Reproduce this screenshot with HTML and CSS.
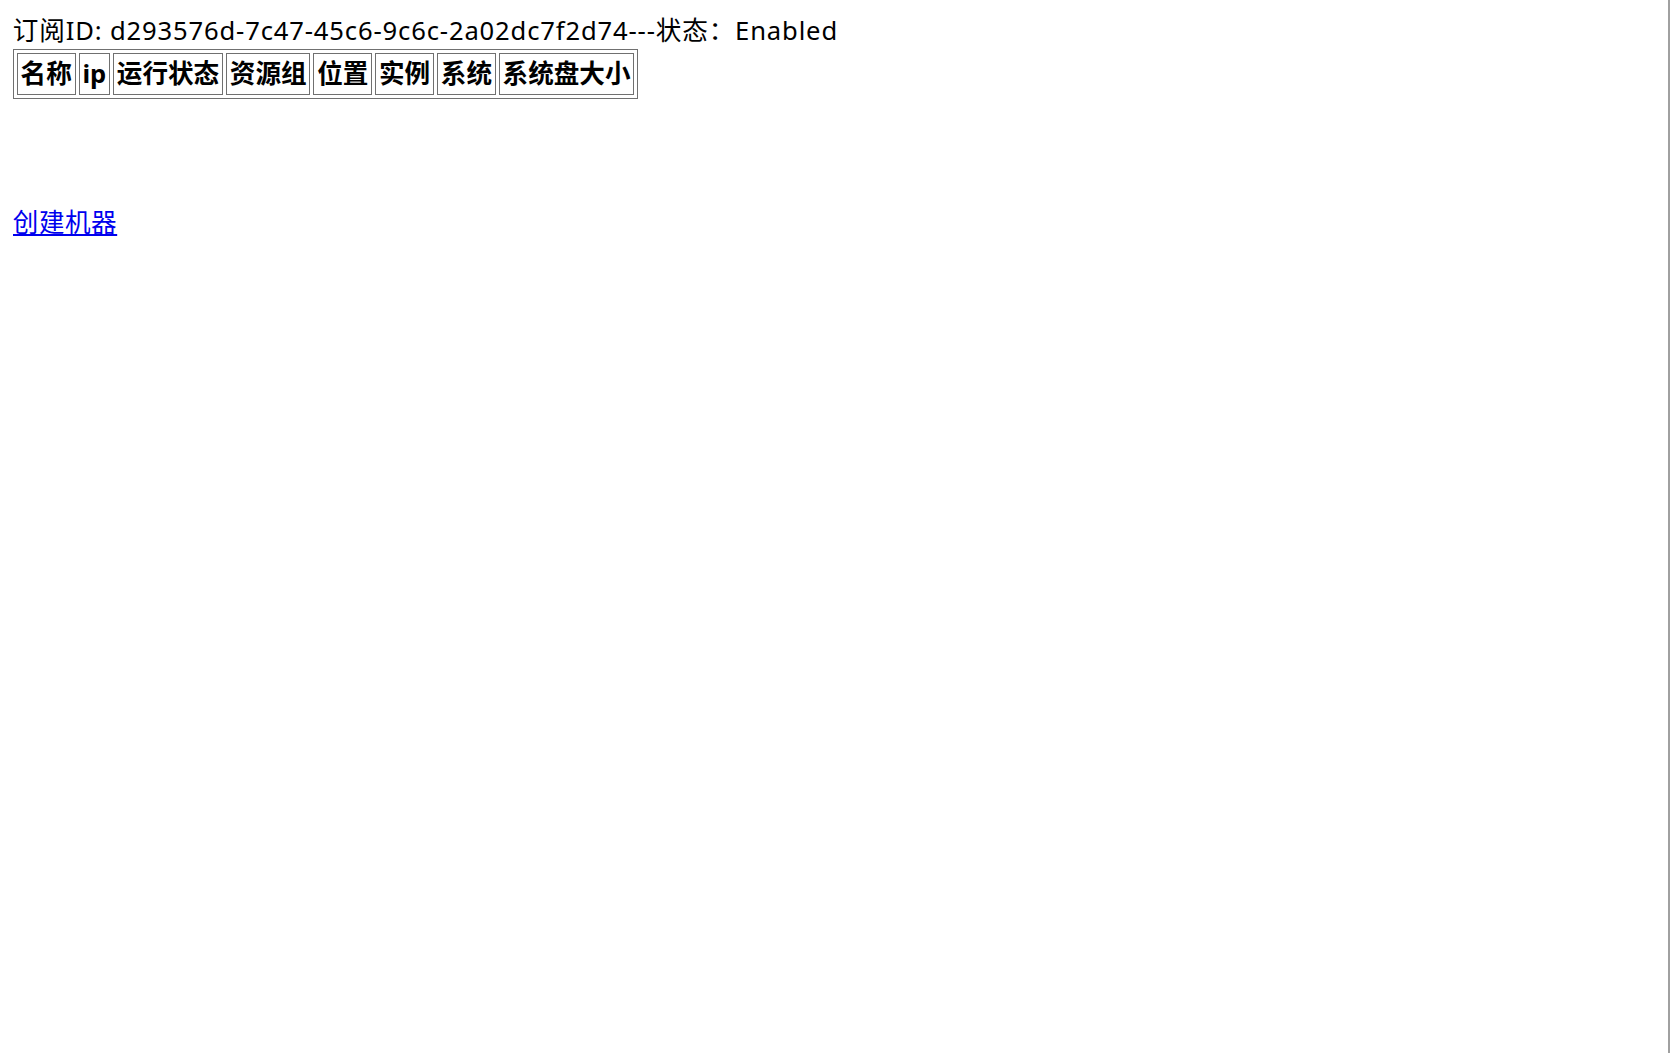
FILE: index.html
```html
<!DOCTYPE html>
<html lang="zh-CN">
<head>
<meta charset="utf-8">
<title>订阅</title>
<link rel="stylesheet" href="styles.css">
</head>
<body>
<div class="sub">订阅ID: d293576d-7c47-45c6-9c6c-2a02dc7f2d74---状态：Enabled</div>
<table class="vm-table">
<thead>
<tr>
<th>名称</th><th>ip</th><th>运行状态</th><th>资源组</th><th>位置</th><th>实例</th><th>系统</th><th>系统盘大小</th>
</tr>
</thead>
</table>
<div class="actions"><a class="create" href="#">创建机器</a></div>
</body>
</html>
```
FILE: styles.css
```css
html {
  min-height: 100%;
  box-sizing: border-box;
  border-right: 2px solid #a0a0a0;
}
body {
  margin: 12.8px;
  font-family: "Noto Sans", "Noto Sans CJK SC", sans-serif;
  font-size: 25.6px;
  color: #000;
  background: #fff;
}
.sub {
  line-height: 36px;
  letter-spacing: 0.85px;
}
.vm-table {
  border: 1.6px solid #707070;
  border-spacing: 3.2px;
}
.vm-table th {
  border: 1.6px solid #707070;
  padding: 1.6px 2.8px;
  font-weight: bold;
  line-height: 37px;
}
.actions {
  margin-top: 106px;
  line-height: 35px;
}
.create {
  color: #0000ee;
  text-decoration: underline;
  letter-spacing: 0.5px;
}
```
